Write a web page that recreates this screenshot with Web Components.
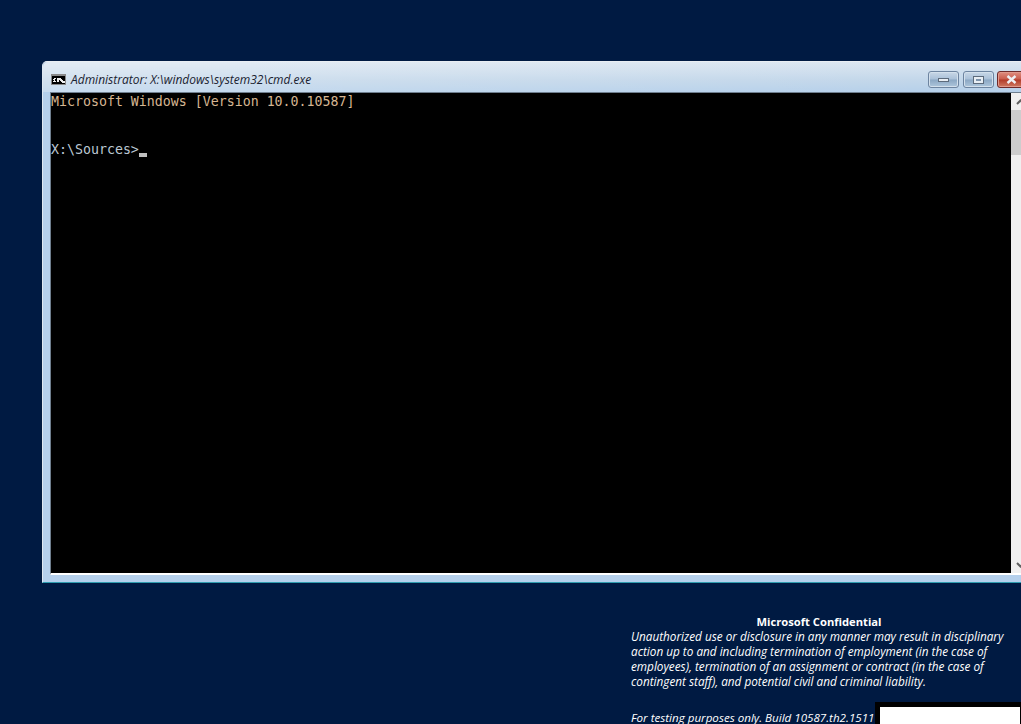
<!DOCTYPE html>
<html>
<head>
<meta charset="utf-8">
<title>cmd.exe</title>
<style>
html, body { margin: 0; height: 100%; background: #001a42; overflow: hidden; }
body { display: flex; flex-direction: column; width: 1021px; height: 724px; }
</style>
</head>
<body>
<x-console-window title-text="Administrator: X:\windows\system32\cmd.exe">
    <x-console-line tone="warm">Microsoft Windows [Version 10.0.10587]</x-console-line>
    <x-console-line></x-console-line>
    <x-console-line></x-console-line>
    <x-console-line cursor>X:\Sources&gt;</x-console-line>
</x-console-window>
<x-legal-notice heading="Microsoft Confidential" build="For testing purposes only. Build 10587.th2.1511">
    <span>Unauthorized use or disclosure in any manner may result in disciplinary</span>
    <span>action up to and including termination of employment (in the case of</span>
    <span>employees), termination of an assignment or contract (in the case of</span>
    <span>contingent staff), and potential civil and criminal liability.</span>
</x-legal-notice>
<script>
{
    const render = (title) => `
        <style>
            :host { display: block; margin: 61px 0 0 42px; width: 990px; height: 522px; flex: none; }
            .frame {
                height: 100%; box-sizing: border-box; display: flex; flex-direction: column;
                background: #b5d0ec; border-radius: 5px 5px 0 0;
                border-top: 1px solid #e9eef3; border-left: 1px solid #dfe8f1;
                border-bottom: 1px solid #2f9db0;
            }
            .bar {
                height: 30px; box-sizing: border-box; flex: none; display: flex; align-items: center; padding: 4px 0 0 8px; gap: 5px;
                background: linear-gradient(90deg, rgba(255,255,255,.25), rgba(255,255,255,0) 90%), linear-gradient(#dbe6f1, #c3d7ea 60%, #b6d0ea);
                border-radius: 5px 5px 0 0;
            }
            .title { font: italic 12px "Open Sans", sans-serif; color: #1a2230; white-space: nowrap; flex: 1; }
            .controls { display: flex; align-self: flex-start; margin-top: 5px; }
            .btn {
                width: 31px; height: 17px; box-sizing: border-box; border: 1px solid #6d84a0; border-radius: 3px;
                display: flex; align-items: center; justify-content: center;
                background: linear-gradient(#c9d8e7, #a9c0d8 48%, #8ba7c3 52%, #aec6dc);
                box-shadow: inset 0 0 0 1px #d3e0ec;
            }
            .btn + .btn { margin-left: 4px; }
            .btn.close {
                width: 35px; margin-left: 3px; justify-content: flex-start; padding-left: 8px;
                border-color: #6e2a2a; background: linear-gradient(#e08e80, #c85c4c 48%, #b23a28 52%, #cf7a62);
                box-shadow: inset 0 0 0 1px #e0998c;
            }
            .body { flex: 1; margin: 0 0 7px 7px; display: flex; min-height: 0; border-top: 1px solid #6f7f8f; border-left: 1px solid #6f7f8f; border-bottom: 2px solid #fff; }
            .screen { width: 960px; background: #000; flex: none; }
            .scroll { width: 22px; background: #f0f0f0; }
        </style>
        <div class="frame">
            <div class="bar">
                <svg width="15" height="11" viewBox="0 0 15 11" shape-rendering="crispEdges">
                    <rect width="15" height="11" fill="#8a8a8a"/>
                    <rect x="1" y="2" width="13" height="8" fill="#000"/>
                    <path d="M3 4h2M2 5h1v2h-1M3 7h2M6 4h1v1h-1M6 6h1v1h-1M8 4h1v1h-1M9 5h1v1h-1M10 6h1v1h-1M11 7h2v1h-2" fill="none" stroke="#eee" stroke-width="1"/>
                </svg>
                <span class="title">${title}</span>
                <div class="controls">
                    <div class="btn"><svg width="11" height="4"><rect x=".5" y=".5" width="10" height="3" fill="#e8eef4" stroke="#5d6b7c"/></svg></div>
                    <div class="btn"><svg width="11" height="8"><rect x=".5" y=".5" width="10" height="7" fill="#e8eef4" stroke="#5d6b7c"/><rect x="3" y="3" width="5" height="2" fill="#7d93ab"/></svg></div>
                    <div class="btn close"><svg width="11" height="9" viewBox="0 0 11 9"><path d="M1.500 1l8 7M9.500 1l-8 7" stroke="#eef0f4" stroke-width="2.400" fill="none"/></svg></div>
                </div>
            </div>
            <div class="body">
                <div class="screen"><slot></slot></div>
                <div class="scroll"><x-scroll-track></x-scroll-track></div>
            </div>
        </div>
    `;

    window.customElements.define('x-console-window', class extends HTMLElement {
        constructor() {
            super();
            this.shadow = this.attachShadow({ mode: 'open' });
            this.shadow.innerHTML = render(this.getAttribute('title-text'));
        }
    });
}

{
    window.customElements.define('x-scroll-track', class extends HTMLElement {
        constructor() {
            super();
            this.shadow = this.attachShadow({ mode: 'open' });
            this.shadow.innerHTML = `
                <style>
                    :host { display: flex; flex-direction: column; height: 100%; }
                    .arrow { height: 17px; display: flex; align-items: center; padding-left: 5px; }
                    .thumb { height: 45px; background: #cdcdcd; }
                    .rest { flex: 1; }
                </style>
                <div class="arrow"><svg width="9" height="6"><path d="M1 5l3.500-3.500L8 5" fill="none" stroke="#606060" stroke-width="2"/></svg></div>
                <div class="thumb"></div>
                <div class="rest"></div>
                <div class="arrow"><svg width="9" height="6"><path d="M1 1l3.500 3.500L8 1" fill="none" stroke="#606060" stroke-width="2"/></svg></div>
            `;
        }
    });
}

{
    window.customElements.define('x-console-line', class extends HTMLElement {
        constructor() {
            super();
            this.shadow = this.attachShadow({ mode: 'open' });
            const cursor = this.hasAttribute('cursor') ? '<i></i>' : '';
            this.shadow.innerHTML = `
                <style>
                    :host { display: block; height: 16px; font: 13.28px/16px "DejaVu Sans Mono", monospace; color: #bcc8d4; }
                    :host([tone="warm"]) { color: #d6b692; }
                    .row { display: flex; height: 16px; white-space: pre; }
                    .text { padding-top: 1px; }
                    i { display: block; width: 8px; height: 4px; background: #c0c0c0; align-self: flex-end; }
                </style>
                <div class="row"><span class="text"><slot></slot></span>${cursor}</div>
            `;
        }
    });
}

{
    window.customElements.define('x-legal-notice', class extends HTMLElement {
        constructor() {
            super();
            this.shadow = this.attachShadow({ mode: 'open' });
            this.shadow.innerHTML = `
                <style>
                    :host { display: block; flex: 1; margin: 31px 0 0 631px; color: #fff; font: italic 11.75px/15px "Open Sans", sans-serif; white-space: nowrap; }
                    h1 { margin: 0; width: 376px; text-align: center; font: bold 11.2px/15px "Open Sans", sans-serif; }
                    .text { display: flex; flex-direction: column; }
                    ::slotted(span) { display: block; }
                    .foot { display: flex; margin: 13px 0 0 0; height: 23px; }
                    .foot span { width: 244px; padding-top: 8px; flex: none; font-size: 11.6px; }
                    .mask { width: 146px; height: 23px; box-sizing: border-box; background: #fff; border: solid #000; border-width: 5px 1px 0 5px; flex: none; }
                </style>
                <h1>${this.getAttribute('heading')}</h1>
                <div class="text"><slot></slot></div>
                <div class="foot"><span>${this.getAttribute('build')}</span><div class="mask"></div></div>
            `;
        }
    });
}
</script>
</body>
</html>
